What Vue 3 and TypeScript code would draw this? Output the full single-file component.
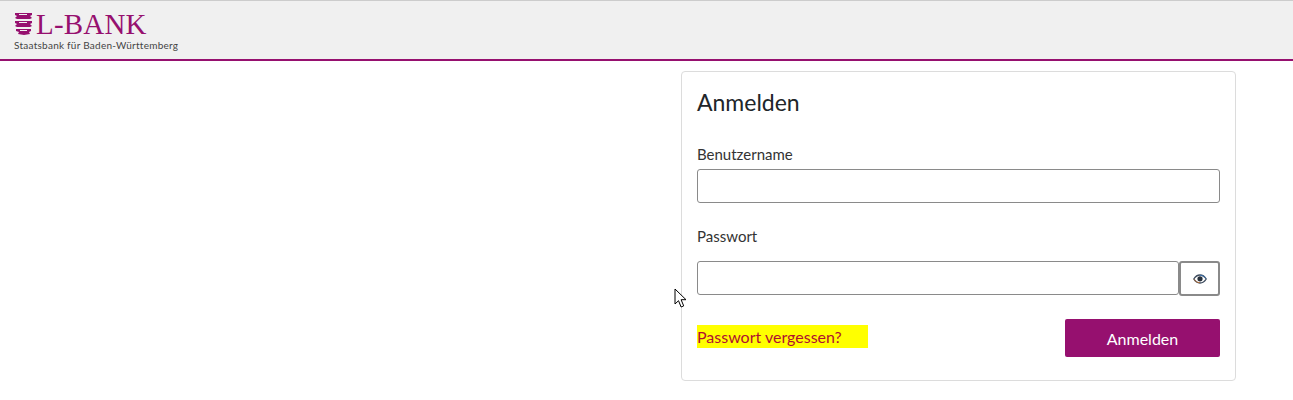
<template>
  <div class="page">
    <header class="topbar">
      <div class="logo">
        <div class="logo-main">
          <svg class="crest" width="19" height="24" viewBox="0 0 19 24">
            <path d="M1 1h17v2l-2 1 2 2-2 1H3L1 6l2-2-2-1z" fill="#96106f" />
            <path d="M1 9h17v2l-2 1 2 2-2 1H3l-2-1 2-2-2-1z" fill="#96106f" />
            <path d="M2 17h15v2l-2 1 1 2-6 1-6-1 1-2-3-1z" fill="#96106f" />
            <path d="M5 2.5h8M5 10.5h8M6 18.5h7" stroke="#f0f0f0" stroke-width="1" />
          </svg>
          <span class="wordmark">L-BANK</span>
        </div>
        <div class="tagline">Staatsbank für Baden-Württemberg</div>
      </div>
    </header>

    <main class="content">
      <section class="card">
        <h1>Anmelden</h1>
        <label class="field-label first">Benutzername</label>
        <input class="text-input" type="text" />
        <label class="field-label second">Passwort</label>
        <div class="password-row">
          <input class="text-input" type="password" />
          <button class="eye-btn" type="button" aria-label="Passwort anzeigen">
            <svg width="14" height="10" viewBox="0 0 14 10">
              <path d="M.8 5C2.4 2.4 4.5 1 7 1s4.600 1.400 6.200 4C11.600 7.600 9.500 9 7 9S2.400 7.600.8 5z" fill="none" stroke="#3c4a5c" stroke-width="1.300" />
              <circle cx="7" cy="4.800" r="2.600" fill="#27303c" />
              <path d="M1 5.300c1.400 2.200 3.300 3.400 6 3.400" fill="none" stroke="#c8702a" stroke-width=".8" />
              <path d="M13 4.700C11.600 2.500 9.700 1.300 7 1.300" fill="none" stroke="#3a78c0" stroke-width=".8" />
            </svg>
          </button>
        </div>
        <div class="actions">
          <a class="forgot" href="#">Passwort vergessen?</a>
          <button class="submit" type="button">Anmelden</button>
        </div>
      </section>
    </main>

    <svg class="cursor" width="13" height="21" viewBox="0 0 13 21">
      <path d="M1 1v15l3.500-3.300 2.600 6.300 2.600-1.100-2.600-6.200H12z" fill="#fff" stroke="#000" stroke-width="1" />
    </svg>
  </div>
</template>

<script setup lang="ts">
</script>

<style>
html, body {
  margin: 0;
  background: #fff;
}
</style>

<style scoped>
.page {
  position: relative;
  height: 400px;
  overflow: hidden;
  font-family: Lato, "Noto Sans", sans-serif;
  color: #212529;
}

.topbar {
  box-sizing: border-box;
  height: 61px;
  padding: 11px 0 0 14px;
  background: #f0f0f0;
  border-top: 1px solid #ccc;
  border-bottom: 2px solid #96106f;
}

.logo-main {
  display: flex;
  align-items: center;
  gap: 3px;
  height: 24px;
}

.wordmark {
  font-family: "Liberation Serif", serif;
  font-size: 29px;
  line-height: 24px;
  color: #96106f;
  letter-spacing: 0.2px;
}

.tagline {
  margin-top: 3px;
  font-size: 10px;
  line-height: 12px;
  letter-spacing: 0.25px;
  color: #444;
}

.content {
  display: flex;
  justify-content: flex-end;
  padding: 10px 57px 0 0;
}

.card {
  box-sizing: border-box;
  width: 555px;
  height: 310px;
  padding: 15px 15px 0;
  background: #fff;
  border: 1px solid #dcdcdc;
  border-radius: 4px;
}

h1 {
  margin: 0;
  font-size: 23px;
  font-weight: 400;
  line-height: 30px;
}

.field-label {
  display: block;
  font-size: 15px;
  line-height: 20px;
  color: #333;
}

.field-label.first {
  margin-top: 27px;
  margin-bottom: 5px;
}

.field-label.second {
  margin-top: 23px;
  margin-bottom: 15px;
}

.text-input {
  display: block;
  box-sizing: border-box;
  width: 100%;
  height: 34px;
  margin: 0;
  padding: 0 8px;
  background: #fff;
  border: 1px solid #8a8a8a;
  border-radius: 3px;
}

.password-row {
  display: flex;
}

.password-row .text-input {
  flex: 1;
  min-width: 0;
}

.eye-btn {
  display: flex;
  flex: none;
  align-items: center;
  justify-content: center;
  box-sizing: border-box;
  width: 41px;
  height: 35px;
  padding: 0;
  background: #fff;
  border: 2px solid #8a8a8a;
  border-radius: 3px;
}

.actions {
  display: flex;
  align-items: flex-start;
  justify-content: space-between;
  margin-top: 23px;
}

.forgot {
  display: block;
  box-sizing: border-box;
  width: 171px;
  height: 23px;
  margin-top: 6px;
  font-size: 16px;
  line-height: 23px;
  color: #b01030;
  background: #ff0;
  text-decoration: none;
}

.submit {
  width: 155px;
  height: 38px;
  padding: 0;
  font-family: inherit;
  font-size: 16px;
  color: #fff;
  background: #96106f;
  border: none;
  border-radius: 2px;
}

.cursor {
  position: absolute;
  left: 674px;
  top: 288px;
}
</style>
